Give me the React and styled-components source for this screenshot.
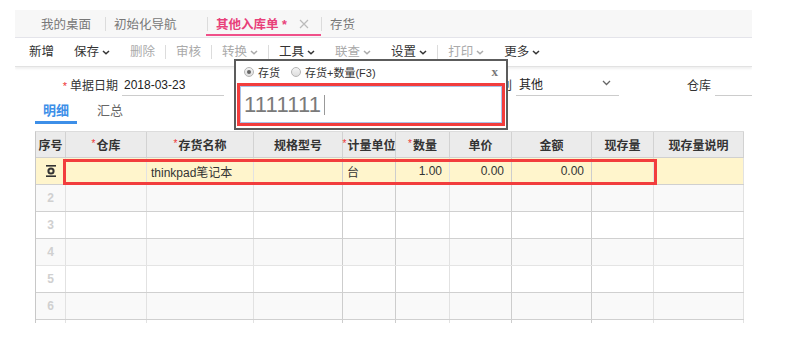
import React from "react";
import styled, { createGlobalStyle } from "styled-components";

const GlobalStyle = createGlobalStyle`
  html, body {
    margin: 0;
    padding: 0;
    background: #fff;
  }
  body {
    font-family: "Liberation Sans", "Noto Sans CJK SC", sans-serif;
    font-size: 12px;
    color: #333;
  }
`;

const Page = styled.div`
  position: relative;
  width: 737px;
  height: 340px;
  margin: 10px 0 0 15px;
  overflow: hidden;
`;

/* ---------- top tabs ---------- */

const TabBar = styled.div`
  display: flex;
  height: 27px;
  padding-left: 17px;
  background: #f7f7f7;
  border-bottom: 1px solid #e4e4ea;
`;

const Tab = styled.div`
  position: relative;
  display: flex;
  align-items: center;
  flex-shrink: 0;
  width: ${(p) => p.$w}px;
  padding-left: 9px;
  box-sizing: border-box;
  font-size: 12.5px;
  color: ${(p) => (p.$active ? "#e8407a" : "#777")};
  font-weight: ${(p) => (p.$active ? "bold" : "normal")};
  &::before {
    content: "";
    display: ${(p) => (p.$first ? "none" : "block")};
    position: absolute;
    left: 0;
    top: 7px;
    width: 1px;
    height: 14px;
    background: #dcdcdc;
  }
  &::after {
    content: "";
    display: ${(p) => (p.$active ? "block" : "none")};
    position: absolute;
    left: -1px;
    right: 0;
    bottom: 1px;
    height: 2px;
    background: #f0508a;
  }
`;

const TabClose = styled.svg`
  margin-left: 12px;
`;

/* ---------- toolbar ---------- */

const Toolbar = styled.div`
  display: flex;
  align-items: center;
  height: 28px;
  padding-left: 4px;
  border-bottom: 1px solid #e2e2e2;
  box-shadow: 0 2px 2px rgba(0, 0, 0, 0.06);
`;

const ToolItem = styled.div`
  display: flex;
  align-items: center;
  padding: 0 10px;
  font-size: 12.5px;
  line-height: 20px;
  color: ${(p) => (p.$disabled ? "#aaa" : "#333")};
`;

const ToolSep = styled.span`
  width: 1px;
  height: 14px;
  background: #dcdcdc;
`;

const ChevronSvg = styled.svg`
  margin-left: 3px;
  margin-top: 1px;
`;

const Chevron = ({ color = "#333" }) => (
  <ChevronSvg width="8" height="5" viewBox="0 0 8 5">
    <path d="M1 1l3 2.8L7 1" fill="none" stroke={color} strokeWidth="1.5" />
  </ChevronSvg>
);

/* ---------- form row ---------- */

const FormRow = styled.div`
  display: flex;
  align-items: flex-end;
  height: 21px;
  margin-top: 8px;
  font-size: 12px;
`;

const FieldLabel = styled.div`
  flex-shrink: 0;
  width: ${(p) => p.$w}px;
  padding-right: 4px;
  box-sizing: border-box;
  text-align: right;
  line-height: 20px;
  color: #333;
  white-space: nowrap;
`;

const Required = styled.span`
  color: #e33;
  font-size: 11px;
  margin-right: 3px;
`;

const FieldInput = styled.div`
  position: relative;
  flex-shrink: 0;
  width: 100px;
  height: 20px;
  padding-left: ${(p) => p.$pl || 2}px;
  border-bottom: 1px solid #ccc;
  line-height: 20px;
  color: #222;
  box-sizing: content-box;
`;

const SelectArrow = styled.svg`
  position: absolute;
  right: 8px;
  top: 5px;
`;

/* ---------- sub tabs ---------- */

const SubTabs = styled.div`
  display: flex;
  gap: 12px;
  height: 24px;
  margin: 4px 0 0 20px;
`;

const SubTab = styled.div`
  width: 42px;
  box-sizing: border-box;
  text-align: center;
  line-height: 21px;
  font-size: 13px;
  color: ${(p) => (p.$active ? "#3d8fe8" : "#666")};
  font-weight: ${(p) => (p.$active ? "bold" : "normal")};
  border-bottom: 3px solid ${(p) => (p.$active ? "#3d8fe8" : "transparent")};
`;

/* ---------- grid ---------- */

const columns = [
  { key: "seq", title: "序号", w: 30, light: true },
  { key: "wh", title: "仓库", w: 81, req: true, light: true },
  { key: "name", title: "存货名称", w: 107, req: true, light: true },
  { key: "spec", title: "规格型号", w: 89 },
  { key: "unit", title: "计量单位", w: 53, req: true },
  { key: "qty", title: "数量", w: 54, req: true, light: true, right: true },
  { key: "price", title: "单价", w: 62, right: true },
  { key: "amount", title: "金额", w: 80, right: true },
  { key: "stock", title: "现存量", w: 62, light: true },
  { key: "note", title: "现存量说明", w: 90, light: true },
];

const gridCols = columns.map((c) => `${c.w}px`).join(" ");

const rows = [
  { seq: "icon", name: "thinkpad笔记本", unit: "台", qty: "1.00", price: "0.00", amount: "0.00" },
  { seq: "2" },
  { seq: "3" },
  { seq: "4", lightBottom: true },
  { seq: "5" },
  { seq: "6" },
  { seq: "" },
];

const GridWrap = styled.div`
  position: relative;
  width: 709px;
  height: 192px;
  margin: 7px 0 0 20px;
  box-sizing: border-box;
  border-left: 1px solid #c8c8c8;
  border-top: 1px solid #dcdcdc;
  overflow: hidden;
`;

const HeadRow = styled.div`
  display: grid;
  grid-template-columns: ${gridCols};
  height: 26px;
  box-sizing: border-box;
  background: #ebebeb;
  border-bottom: 1px solid #d0d0d0;
`;

const HeadCell = styled.div`
  display: flex;
  align-items: center;
  justify-content: center;
  border-right: 1px solid #d2d2d2;
  font-size: 12px;
  font-weight: bold;
  color: #333;
  white-space: nowrap;
`;

const HeadStar = styled.span`
  color: #e33;
  font-size: 10px;
  font-weight: normal;
  margin-right: 1px;
  align-self: flex-start;
  margin-top: 6px;
`;

const BodyRow = styled.div`
  display: grid;
  grid-template-columns: ${gridCols};
  height: 27px;
  box-sizing: border-box;
  background: ${(p) => p.$bg};
  border-bottom: 1px solid ${(p) => (p.$lightBottom ? "#e4e4e4" : "#d0d0d0")};
`;

const Cell = styled.div`
  display: flex;
  align-items: center;
  justify-content: ${(p) => (p.$center ? "center" : p.$right ? "flex-end" : "flex-start")};
  padding: ${(p) => (p.$right ? "0 7px 0 0" : "0 0 0 4px")};
  border-right: 1px solid ${(p) => (p.$light ? "#e2e2e2" : "#cdcdcd")};
  font-size: 12px;
  color: #333;
  white-space: nowrap;
  overflow: hidden;
`;

const SeqCell = styled(Cell)`
  padding: 0;
  color: #d0d0d0;
  font-weight: bold;
`;

const EditMarker = () => (
  <svg width="10" height="12" viewBox="0 0 10 12">
    <rect x="0" y="0" width="10" height="1.6" fill="#333" />
    <rect x="0" y="10.4" width="10" height="1.6" fill="#333" />
    <circle cx="5" cy="6" r="2.6" fill="none" stroke="#333" strokeWidth="2" />
  </svg>
);

const RowHighlight = styled.div`
  position: absolute;
  left: 27px;
  top: 27px;
  width: 594px;
  height: 26px;
  box-sizing: border-box;
  border: 3px solid #f23d3d;
  pointer-events: none;
`;

/* ---------- scan popup ---------- */

const Popup = styled.div`
  position: absolute;
  left: 219px;
  top: 49px;
  width: 274px;
  height: 71px;
  box-sizing: border-box;
  border: 2px solid #5c5c5c;
  background: #fff;
`;

const RadioRow = styled.div`
  display: flex;
  align-items: center;
  height: 22px;
  padding: 0 8px;
  font-size: 11px;
  color: #333;
`;

const Radio = styled.span`
  position: relative;
  width: 10px;
  height: 10px;
  box-sizing: border-box;
  border-radius: 50%;
  border: 1px solid #b5b5b5;
  background: linear-gradient(#f4f4f4, #dedede);
  margin: 0 4px 0 ${(p) => p.$ml || 0}px;
  &::after {
    content: "";
    display: ${(p) => (p.$checked ? "block" : "none")};
    position: absolute;
    left: 2px;
    top: 2px;
    width: 4px;
    height: 4px;
    border-radius: 50%;
    background: #666;
  }
`;

const CloseX = styled.span`
  margin-left: auto;
  font-family: "Liberation Serif", serif;
  font-weight: bold;
  font-size: 13px;
  color: #777;
  line-height: 12px;
`;

const ScanBox = styled.div`
  width: 268px;
  height: 43px;
  margin-left: 1px;
  box-sizing: border-box;
  border: 3px solid #f23d3d;
`;

const ScanInput = styled.div`
  display: flex;
  align-items: center;
  height: 100%;
  box-sizing: border-box;
  border: 1px solid #a9c3ea;
  padding-left: 3px;
  font-size: 22px;
  letter-spacing: 0.2px;
  color: #7a7a7a;
`;

const Caret = styled.span`
  width: 1px;
  height: 20px;
  margin-left: 3px;
  background: #999;
`;

export default function App() {
  return (
    <>
      <GlobalStyle />
      <Page>
        <TabBar>
          <Tab $w={73} $first>我的桌面</Tab>
          <Tab $w={102}>初始化导航</Tab>
          <Tab $w={114} $active>
            其他入库单 *
            <TabClose width="10" height="10" viewBox="0 0 10 10">
              <path d="M1 1l8 8M9 1l-8 8" stroke="#bbb" strokeWidth="1.2" />
            </TabClose>
          </Tab>
          <Tab $w={60}>存货</Tab>
        </TabBar>

        <Toolbar>
          <ToolItem>新增</ToolItem>
          <ToolItem>
            保存<Chevron />
          </ToolItem>
          <ToolItem $disabled>删除</ToolItem>
          <ToolSep />
          <ToolItem $disabled>审核</ToolItem>
          <ToolSep />
          <ToolItem $disabled>
            转换<Chevron color="#aaa" />
          </ToolItem>
          <ToolSep />
          <ToolItem>
            工具<Chevron />
          </ToolItem>
          <ToolItem $disabled>
            联查<Chevron color="#aaa" />
          </ToolItem>
          <ToolItem>
            设置<Chevron />
          </ToolItem>
          <ToolSep />
          <ToolItem $disabled>
            打印<Chevron color="#aaa" />
          </ToolItem>
          <ToolItem>
            更多<Chevron />
          </ToolItem>
        </Toolbar>

        <FormRow>
          <FieldLabel $w={107}>
            <Required>*</Required>单据日期
          </FieldLabel>
          <FieldInput>2018-03-23</FieldInput>
          <FieldLabel $w={292}>
            <Required>*</Required>入库类别
          </FieldLabel>
          <FieldInput $pl={3}>
            其他
            <SelectArrow width="9" height="6" viewBox="0 0 9 6">
              <path d="M1 1l3.5 3.5L8 1" fill="none" stroke="#666" strokeWidth="1.3" />
            </SelectArrow>
          </FieldInput>
          <FieldLabel $w={96}>仓库</FieldLabel>
          <FieldInput />
        </FormRow>

        <SubTabs>
          <SubTab $active>明细</SubTab>
          <SubTab>汇总</SubTab>
        </SubTabs>

        <GridWrap>
          <HeadRow>
            {columns.map((c) => (
              <HeadCell key={c.key}>
                {c.req && <HeadStar>*</HeadStar>}
                {c.title}
              </HeadCell>
            ))}
          </HeadRow>
          {rows.map((r, i) => (
            <BodyRow
              key={i}
              $bg={i === 0 ? "#fff5cc" : i % 2 === 1 ? "#f9f9f9" : "#fff"}
              $lightBottom={r.lightBottom}
            >
              {columns.map((c) =>
                c.key === "seq" ? (
                  <SeqCell key={c.key} $center $light={c.light}>
                    {r.seq === "icon" ? <EditMarker /> : r.seq}
                  </SeqCell>
                ) : (
                  <Cell key={c.key} $right={c.right} $light={c.light}>
                    {r[c.key]}
                  </Cell>
                )
              )}
            </BodyRow>
          ))}
          <RowHighlight />
        </GridWrap>

        <Popup>
          <RadioRow>
            <Radio $checked />
            存货
            <Radio $ml={11} />
            存货+数量(F3)
            <CloseX>x</CloseX>
          </RadioRow>
          <ScanBox>
            <ScanInput>
              1111111
              <Caret />
            </ScanInput>
          </ScanBox>
        </Popup>
      </Page>
    </>
  );
}
